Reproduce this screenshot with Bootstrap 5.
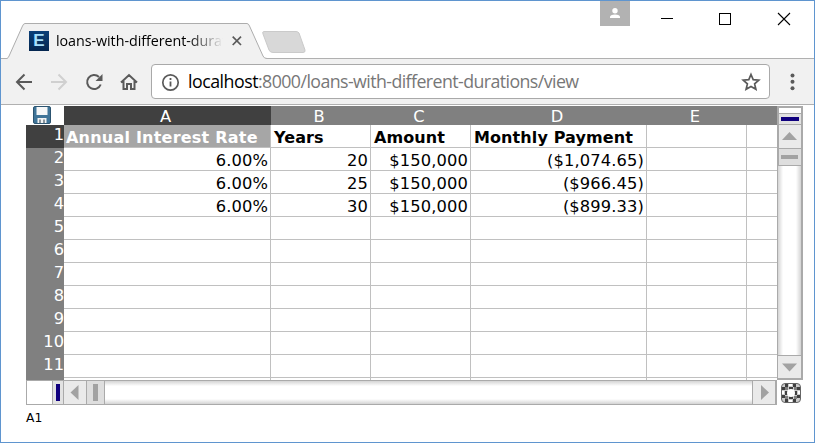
<!DOCTYPE html>
<html lang="en">
<head>
<meta charset="utf-8">
<meta name="viewport" content="width=device-width, initial-scale=1">
<title>loans-with-different-durations</title>
<link href="https://cdn.jsdelivr.net/npm/bootstrap@5.3.0/dist/css/bootstrap.min.css" rel="stylesheet">
<style>
body{margin:0;background:#fff;overflow:hidden;font-family:"DejaVu Sans",sans-serif;color:#000}
svg{display:block;flex:none}
.window{width:815px;height:443px;border:1px solid #5f95cf}
.titlebar{height:58px;border-bottom:1px solid #b0b0b0}
.browser-tab{width:266px;height:36px;margin:22px 0 0 6px;z-index:1}
.tab-shape{z-index:-1}
.favicon{width:20px;height:20px;margin-left:22px;background:linear-gradient(#0a3f78,#04264f);color:#a6e0fb;font:bold 17px/20px "Liberation Sans",sans-serif}
.tab-title{width:168px;margin-left:7px;font:14.3px/20px "Open Sans","Noto Sans",sans-serif;letter-spacing:-.05px;-webkit-mask-image:linear-gradient(90deg,#000 132px,transparent 167px);mask-image:linear-gradient(90deg,#000 132px,transparent 167px)}
.new-tab{margin:30px 0 0 -12px}
.profile{width:30px;height:25px;background:#b2b2b2;margin-right:31px}
.toolbar{height:46px;background:#f1f1f1;border-bottom:1px solid #b0b0b0;padding-left:14px}
.address{flex:none;width:619px;height:35px;margin-left:13px;border:1px solid #a9a9a9;border-radius:4px;font:17.8px/31px "Open Sans","Noto Sans",sans-serif;letter-spacing:-.58px;color:#777}
.address b{font-weight:400;color:#000;letter-spacing:-.5px}
.sheet{margin:1px 0 0 25px;width:777px}
.grid-area{width:751px;height:274px}
.cells{table-layout:fixed;width:920px;border-collapse:separate;border-spacing:0;font-size:16.3px;line-height:22px}
.cells th,.cells td{padding:0;white-space:nowrap}
.cells thead th{height:19px;line-height:17px;background:#808080;color:#fff;font-weight:400;text-align:center;padding:2px 4px 0 0}
.cells thead th.corner{background:#fff;padding:0;vertical-align:top}
.disk{margin:0 0 0 7px}
.cells tbody th{background:#808080;color:#fff;font-weight:400;text-align:right;line-height:20px;vertical-align:top;height:23px}
.cells thead th.on,.cells tbody th.on{background:#404040}
.cells td{height:23px;border-right:1px solid #c0c0c0;border-bottom:1px solid #c0c0c0;text-align:right;vertical-align:top;padding:4px 2px 0 2px;line-height:18px;letter-spacing:.12px}
.cells td.head{text-align:left;font-weight:700;font-size:16px;padding-left:3px;letter-spacing:.1px}
.cells td.sel{background:#a6a6a6;color:#fff;padding-left:2px;letter-spacing:.22px}
.status{margin:6px 0 0 25px;font-size:12.3px;line-height:14px}
</style>
<script src="https://cdn.jsdelivr.net/npm/bootstrap@5.3.0/dist/js/bootstrap.bundle.min.js"></script>
</head>
<body>
<main class="window overflow-hidden">
 <header class="titlebar d-flex align-items-start">
  <div class="browser-tab position-relative d-flex align-items-center">
   <svg class="tab-shape position-absolute top-0 start-0" width="266" height="36"><path d="M0 35.5Q1.500 35 2.500 32L15.500 3Q16.500.5 18 .5H240Q241.500.5 242.500 3L256 33Q257 35.500 260 35.500V36H0Z" fill="#f1f1f1"/><path d="M0 35.500Q1.500 35 2.500 32L15.500 3Q16.500.5 18 .5H240Q241.500.5 242.500 3L256 33Q257 35.500 260 35.500" fill="none" stroke="#adadad"/></svg>
   <div class="favicon text-center">E</div>
   <div class="tab-title overflow-hidden text-nowrap">loans-with-different-durations</div>
   <svg width="10" height="10" class="ms-2"><path d="M.7.7L9 9M9 .7L.7 9" stroke="#5a5a5a" stroke-width="1.700"/></svg>
  </div>
  <svg class="new-tab" width="46" height="23"><path d="M3 .5H35Q37 .5 38 2L44 19Q44.500 21.500 42 21.500H12Q9 21.500 8 19L2 3Q1 .5 3 .5Z" fill="#d8d8d8" stroke="#cacaca"/></svg>
  <div class="d-flex align-items-start ms-auto">
   <div class="profile d-flex justify-content-center"><svg width="12" height="18"><circle cx="6" cy="9.700" r="2.700" fill="#fff"/><path d="M1 17V16Q1 13.500 6 13.500T11 16V17Z" fill="#fff"/></svg></div>
   <svg width="153" height="30"><path d="M0 17.500H12" stroke="#000"/><rect x="58.500" y="12.500" width="11" height="11" fill="none" stroke="#000"/><path d="M117 12L129 24M129 12L117 24" stroke="#000" stroke-width="1.100"/></svg>
  </div>
 </header>
 <div class="toolbar d-flex align-items-center">
  <svg width="123" height="24" fill="none" stroke="#5a5a5a" stroke-width="2"><path d="M17 12H2M9.500 4.500L2 12L9.500 19.500"/><path d="M36 12H51M43.500 4.500L51 12L43.500 19.500" stroke="#d0d0d0"/><path d="M85.700 14.500A7 7 0 1 1 84 7"/><path d="M87.500 4V11H80.500Z" fill="#5a5a5a" stroke="none"/><path d="M106 12.500L114 5L122 12.500M108.500 11V19H112V14H116V19H119.500V11"/></svg>
  <div class="address bg-white d-flex align-items-center">
   <svg class="ms-2" width="20" height="20"><circle cx="10.500" cy="10.500" r="7.700" fill="none" stroke="#5a5a5a" stroke-width="1.700"/><path d="M10.500 9.500V14.500M10.500 6V8" stroke="#5a5a5a" stroke-width="1.800"/></svg>
   <div class="ms-2 text-nowrap"><b>localhost</b>:8000/loans-with-different-durations/view</div>
   <svg class="ms-auto me-2" width="20" height="20"><path d="M10 2.500L12.200 7.700L17.800 8.200L13.600 11.900L14.900 17.300L10 14.400L5.100 17.300L6.400 11.900L2.200 8.200L7.800 7.700Z" fill="none" stroke="#5a5a5a" stroke-width="1.700"/></svg>
  </div>
  <svg width="44" height="20" fill="#5a5a5a"><circle cx="22.500" cy="3.500" r="2"/><circle cx="22.500" cy="9.800" r="2"/><circle cx="22.500" cy="16.200" r="2"/></svg>
 </div>
 <section class="sheet">
  <div class="d-flex">
   <div class="grid-area overflow-hidden">
    <table class="cells">
     <colgroup><col style="width:38px"><col style="width:207px"><col style="width:100px"><col style="width:100px"><col style="width:176px"><col style="width:100px"><col></colgroup>
     <thead><tr><th class="corner"><svg class="disk" width="18" height="18"><path d="M.5 2Q.5.5 2 .5H16Q17.500.5 17.500 2V16Q17.500 17.500 16 17.500H2Q.5 17.500.5 16Z" fill="#3f7498" stroke="#2c5470"/><path d="M3.500 1H14.500V9H3.500Z" fill="#f5f7f8"/><path d="M4.500 12H13.500V17H4.500Z" fill="#f0f2f3"/><path d="M6 13.500H8V17H6ZM10 13.500H12V17H10Z" fill="#8a949b"/></svg></th><th class="on">A</th><th>B</th><th>C</th><th>D</th><th>E</th><th></th></tr></thead>
     <tbody>
      <tr><th class="on">1</th><td class="head sel">Annual Interest Rate</td><td class="head">Years</td><td class="head">Amount</td><td class="head">Monthly Payment</td><td></td><td></td></tr>
      <tr><th>2</th><td>6.00%</td><td>20</td><td>$150,000</td><td>($1,074.65)</td><td></td><td></td></tr>
      <tr><th>3</th><td>6.00%</td><td>25</td><td>$150,000</td><td>($966.45)</td><td></td><td></td></tr>
      <tr><th>4</th><td>6.00%</td><td>30</td><td>$150,000</td><td>($899.33)</td><td></td><td></td></tr>
      <tr><th>5</th><td></td><td></td><td></td><td></td><td></td><td></td></tr>
      <tr><th>6</th><td></td><td></td><td></td><td></td><td></td><td></td></tr>
      <tr><th>7</th><td></td><td></td><td></td><td></td><td></td><td></td></tr>
      <tr><th>8</th><td></td><td></td><td></td><td></td><td></td><td></td></tr>
      <tr><th>9</th><td></td><td></td><td></td><td></td><td></td><td></td></tr>
      <tr><th>10</th><td></td><td></td><td></td><td></td><td></td><td></td></tr>
      <tr><th>11</th><td></td><td></td><td></td><td></td><td></td><td></td></tr>
      <tr><th></th><td></td><td></td><td></td><td></td><td></td><td></td></tr>
     </tbody>
    </table>
   </div>
   <svg width="26" height="274">
    <defs><linearGradient id="v"><stop offset="0" stop-color="#d4d4d4"/><stop offset=".22" stop-color="#fff"/><stop offset=".78" stop-color="#fff"/><stop offset="1" stop-color="#d4d4d4"/></linearGradient></defs>
    <rect width="26" height="274" fill="#aaa"/><rect x="2" y="2" width="22" height="5" fill="#fff"/>
    <rect x="2" y="8" width="22" height="10" fill="#e2e2e2"/><rect x="4" y="11" width="18" height="4" fill="#10007e"/>
    <rect x="2" y="19" width="22" height="23" fill="#eaeaea"/><path d="M12.500 26L20 34H5Z" fill="#a2a2a2"/>
    <rect x="2" y="43" width="22" height="16" fill="#dedede"/><rect x="4" y="49" width="17" height="4" fill="#a2a2a2"/>
    <rect x="1" y="60" width="23" height="189" fill="url(#v)"/>
    <rect x="1" y="250" width="23" height="22" fill="#eaeaea"/><path d="M5 257.500H20L12.500 265.500Z" fill="#a2a2a2"/>
   </svg>
  </div>
  <div class="d-flex">
   <svg width="751" height="25">
    <defs><linearGradient id="h" x2="0" y2="1"><stop offset="0" stop-color="#d4d4d4"/><stop offset=".22" stop-color="#fff"/><stop offset=".78" stop-color="#fff"/><stop offset="1" stop-color="#d4d4d4"/></linearGradient></defs>
    <rect width="751" height="25" fill="#aaa"/><rect x="1" y="1" width="25" height="23" fill="#fff"/>
    <rect x="27" y="1" width="10" height="23" fill="#e2e2e2"/><rect x="30" y="4" width="4" height="17" fill="#10007e"/>
    <rect x="38" y="1" width="22" height="23" fill="#eaeaea"/><path d="M52.500 5V20L44.500 12.500Z" fill="#a2a2a2"/>
    <rect x="61" y="1" width="17" height="23" fill="#dedede"/><rect x="67" y="4" width="5" height="17" fill="#a2a2a2"/>
    <rect x="79" y="1" width="647" height="23" fill="url(#h)"/>
    <rect x="727" y="1" width="22" height="23" fill="#eaeaea"/><path d="M735 5V20L743 12.500Z" fill="#a2a2a2"/>
   </svg>
   <svg width="26" height="25">
    <rect x="4.500" y="3.500" width="19" height="19" rx="3.500" fill="#ccc" stroke="#666"/>
    <g fill="#3f3f3f"><path d="M5 7H8V10H5ZM5 15H8V18H5ZM20 7H23V10H20ZM20 15H23V18H20ZM8 4H11V7H8ZM16 4H19V7H16ZM8 19H11V22H8ZM16 19H19V22H16Z"/><path d="M12 7H16V10H12ZM12 16H16V19H12ZM8 11H11V15H8ZM17 11H20V15H17Z"/><path d="M8 7H11V10H8ZM17 7H20V10H17ZM8 16H11V19H8ZM17 16H20V19H17Z" opacity=".55"/></g>
    <g fill="#fff"><circle cx="14" cy="13" r="4"/><path d="M12 4H15V6H12ZM12 20H15V22H12ZM5 11H7V14H5ZM21 11H23V14H21Z"/></g>
   </svg>
  </div>
 </section>
 <footer class="status">A1</footer>
</main>
</body>
</html>
